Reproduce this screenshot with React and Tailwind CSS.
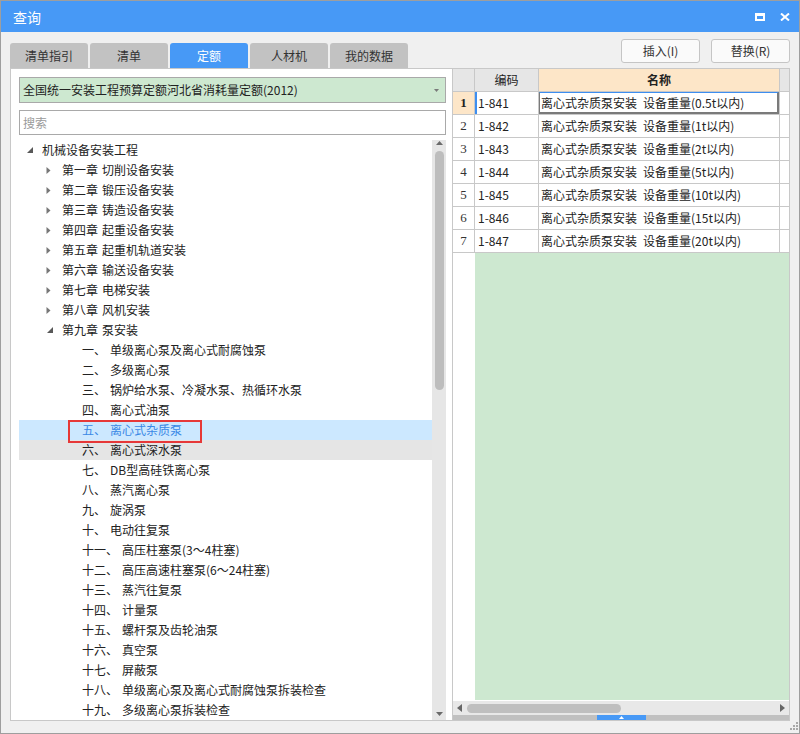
import React from 'react';

const TABS = ['清单指引', '清单', '定额', '人材机', '我的数据'];

const CHAPTERS = [
  ['第一章', '切削设备安装'],
  ['第二章', '锻压设备安装'],
  ['第三章', '铸造设备安装'],
  ['第四章', '起重设备安装'],
  ['第五章', '起重机轨道安装'],
  ['第六章', '输送设备安装'],
  ['第七章', '电梯安装'],
  ['第八章', '风机安装'],
];

const SECTIONS = [
  ['一、', '单级离心泵及离心式耐腐蚀泵'],
  ['二、', '多级离心泵'],
  ['三、', '锅炉给水泵、冷凝水泵、热循环水泵'],
  ['四、', '离心式油泵'],
  ['五、', '离心式杂质泵'],
  ['六、', '离心式深水泵'],
  ['七、', 'DB型高硅铁离心泵'],
  ['八、', '蒸汽离心泵'],
  ['九、', '旋涡泵'],
  ['十、', '电动往复泵'],
  ['十一、', '高压柱塞泵(3～4柱塞)'],
  ['十二、', '高压高速柱塞泵(6～24柱塞)'],
  ['十三、', '蒸汽往复泵'],
  ['十四、', '计量泵'],
  ['十五、', '螺杆泵及齿轮油泵'],
  ['十六、', '真空泵'],
  ['十七、', '屏蔽泵'],
  ['十八、', '单级离心泵及离心式耐腐蚀泵拆装检查'],
  ['十九、', '多级离心泵拆装检查'],
];

const ROWS = [
  ['1-841', '0.5t'],
  ['1-842', '1t'],
  ['1-843', '2t'],
  ['1-844', '5t'],
  ['1-845', '10t'],
  ['1-846', '15t'],
  ['1-847', '20t'],
];

const treeRows = [
  { level: 0, state: 'open', parts: ['机械设备安装工程'] },
  ...CHAPTERS.map((c) => ({ level: 1, state: 'closed', parts: c })),
  { level: 1, state: 'open', parts: ['第九章', '泵安装'] },
  ...SECTIONS.map((s) => ({ level: 2, state: 'leaf', parts: s })),
];

function Toggle({ state }) {
  if (state === 'open') {
    return (
      <svg width="6" height="6" viewBox="0 0 6 6" className="ml-[2px]">
        <polygon points="6,0 6,6 0,6" fill="#595959" />
      </svg>
    );
  }
  if (state === 'closed') {
    return (
      <svg width="5" height="7" viewBox="0 0 5 7" className="ml-[1px]">
        <polygon points="0.5,0 4.5,3.5 0.5,7" fill="#777777" />
      </svg>
    );
  }
  return null;
}

function TreeRow({ row, index }) {
  const selected = index === 14;
  const hover = index === 15;
  const pad = ['pl-[6px]', 'pl-[26px]', 'pl-[46px]'][row.level];
  let bg = '';
  if (selected) bg = 'bg-[#cce8ff] text-[#3a89e6]';
  else if (hover) bg = 'bg-[#e5e5e5] text-[#222]';
  else bg = 'text-[#222]';

  return (
    <div className={`relative h-[20px] flex items-center shrink-0 ${pad} ${bg}`}>
      <div className="w-[16px] h-[20px] flex items-center">
        <Toggle state={row.state} />
      </div>
      <span className="ml-[1px] whitespace-nowrap">{row.parts[0]}</span>
      {row.parts[1] && <span className="ml-[4px] whitespace-nowrap">{row.parts[1]}</span>}
      {selected && (
        <span className="absolute z-10 left-[49px] top-0 w-[134px] h-[23px] border-2 border-[#e63838]" />
      )}
    </div>
  );
}

function GridRow({ code, weight, index }) {
  const first = index === 0;
  return (
    <div className="flex h-[23px] border-b border-[#c8c8c8] shrink-0">
      <div
        className={`w-[22px] border-r border-[#c8c8c8] flex items-center justify-center font-['Liberation_Serif',serif] text-[13px] ${
          first ? 'bg-[#fde6c8] font-bold text-[#222]' : 'bg-white text-[#333]'
        }`}
      >
        {index + 1}
      </div>
      <div
        className={`w-[64px] border-r border-[#c8c8c8] flex items-center pl-[3px] ${
          first ? 'shadow-[inset_2px_0_0_#3d8ef0]' : ''
        }`}
      >
        {code}
      </div>
      <div className="relative w-[241px] border-r border-[#c8c8c8] flex items-center pl-[2px] whitespace-nowrap">
        <span>离心式杂质泵安装</span>
        <span className="ml-[6px]">设备重量({weight}以内)</span>
        {first && (
          <span className="absolute inset-0 border-t border-l border-r-2 border-b-2 border-[#7a7a7a] border-t-[#3d8ef0]" />
        )}
      </div>
      <div className="flex-1 bg-white" />
    </div>
  );
}

export default function App() {
  return (
    <div className="relative w-[800px] h-[734px] flex flex-col bg-[#f0f0f0] border border-[#9e9e9e] font-['Noto_Sans_CJK_SC',sans-serif] text-[12px] text-[#222] overflow-hidden">
      {/* title bar */}
      <div className="h-[31px] shrink-0 bg-[#4799f6] flex items-center justify-between pl-[12px] pr-[9px]">
        <span className="text-white text-[14px] leading-none">查询</span>
        <div className="flex items-center gap-[15px]">
          <svg width="10" height="8" viewBox="0 0 10 8">
            <rect x="1" y="1" width="8" height="6" fill="none" stroke="#fff" strokeWidth="2" />
            <rect x="0" y="0" width="10" height="3" fill="#fff" />
          </svg>
          <svg width="10" height="8" viewBox="0 0 10 8">
            <path d="M1 0.5 L9 7.5 M9 0.5 L1 7.5" stroke="#fff" strokeWidth="2" />
          </svg>
        </div>
      </div>

      {/* body */}
      <div className="flex-1 flex flex-col pl-[9px] pr-[9px] pb-[12px]">
        <div className="h-[36px] shrink-0 flex justify-between">
          <div className="self-end flex gap-[2px]">
            {TABS.map((t) => (
              <div
                key={t}
                className={`w-[78px] h-[25px] rounded-t-[3px] flex items-center justify-center ${
                  t === '定额' ? 'bg-[#4799f6] text-white' : 'bg-[#c2c2c2] text-[#333]'
                }`}
              >
                {t}
              </div>
            ))}
          </div>
          <div className="flex gap-[11px] pt-[7px]">
            <button className="w-[79px] h-[24px] border border-[#c5c5c5] rounded-[3px] bg-[#fafafa] text-[#333]">
              插入(I)
            </button>
            <button className="w-[79px] h-[24px] border border-[#c5c5c5] rounded-[3px] bg-[#fafafa] text-[#333]">
              替换(R)
            </button>
          </div>
        </div>

        <div className="flex h-[653px]">
          {/* left panel */}
          <div className="w-[442px] flex flex-col bg-white border-l border-t border-b border-[#c8c8c8] pl-[8px] pr-[6px] pt-[8px]">
            <div className="h-[26px] shrink-0 border border-[#a9a9a9] bg-[#cde8d0] flex items-center justify-between pl-[3px] pr-[6px]">
              <span className="whitespace-nowrap">全国统一安装工程预算定额河北省消耗量定额(2012)</span>
              <svg width="5" height="3" viewBox="0 0 5 3">
                <polygon points="0,0 5,0 2.5,3" fill="#7a7a7a" />
              </svg>
            </div>
            <div className="mt-[7px] h-[25px] shrink-0 border border-[#a9a9a9] bg-white flex items-center pl-[3px] text-[#9a9a9a]">
              搜索
            </div>
            <div className="mt-[5px] flex-1 min-h-0 flex">
              <div className="flex-1 flex flex-col overflow-hidden">
                {treeRows.map((r, i) => (
                  <TreeRow key={i} row={r} index={i} />
                ))}
              </div>
              <div className="w-[14px] bg-[#e6e6e6] flex flex-col items-center">
                <svg width="7" height="4" viewBox="0 0 7 4" className="mt-[1px]">
                  <polygon points="3.5,0 7,4 0,4" fill="#6a6a6a" />
                </svg>
                <div className="mt-[6px] w-[9px] h-[239px] rounded-full bg-[#bdbdbd]" />
                <div className="flex-1" />
                <svg width="7" height="4" viewBox="0 0 7 4" className="mb-[4px]">
                  <polygon points="0,0 7,0 3.5,4" fill="#6a6a6a" />
                </svg>
              </div>
            </div>
          </div>

          {/* right panel */}
          <div className="w-[338px] flex flex-col bg-white border border-[#c8c8c8]">
            <div className="flex h-[23px] shrink-0 border-b border-[#c8c8c8]">
              <div className="w-[22px] bg-[#e6e6e6] border-r border-[#c8c8c8]" />
              <div className="w-[64px] bg-[#e6e6e6] border-r border-[#c8c8c8] flex items-center justify-center">
                编码
              </div>
              <div className="w-[241px] bg-[#fde6c8] border-r border-[#c8c8c8] flex items-center justify-center font-bold">
                名称
              </div>
              <div className="flex-1 bg-[#e6e6e6]" />
            </div>
            {ROWS.map(([code, weight], i) => (
              <GridRow key={code} code={code} weight={weight} index={i} />
            ))}
            <div className="flex-1 flex">
              <div className="w-[22px] bg-white" />
              <div className="flex-1 bg-[#cde8d0]" />
            </div>
            <div className="h-[15px] shrink-0 bg-[#e8e8e8] border-t border-white flex items-center pl-[4px] pr-[4px]">
              <svg width="5" height="8" viewBox="0 0 5 8">
                <polygon points="5,0 5,8 0,4" fill="#666" />
              </svg>
              <div className="ml-[5px] w-[154px] h-[9px] rounded-full bg-[#bfbfbf]" />
              <div className="flex-1" />
              <svg width="5" height="8" viewBox="0 0 5 8">
                <polygon points="0,0 5,4 0,8" fill="#666" />
              </svg>
            </div>
            <div className="h-[5px] shrink-0 bg-[#c0c0c0] flex justify-center">
              <div className="w-[49px] bg-[#4799f6] flex items-center justify-center">
                <svg width="5" height="3" viewBox="0 0 5 3">
                  <polygon points="2.5,0 5,3 0,3" fill="#fff" />
                </svg>
              </div>
            </div>
          </div>
        </div>
      </div>

      {/* resize grip */}
      <svg width="8" height="8" viewBox="0 0 8 8" className="absolute right-[1px] bottom-[3px]">
        <rect x="6" y="0" width="2" height="2" fill="#a8a8a8" />
        <rect x="3" y="3" width="2" height="2" fill="#a8a8a8" />
        <rect x="6" y="3" width="2" height="2" fill="#a8a8a8" />
        <rect x="0" y="6" width="2" height="2" fill="#a8a8a8" />
        <rect x="3" y="6" width="2" height="2" fill="#a8a8a8" />
        <rect x="6" y="6" width="2" height="2" fill="#a8a8a8" />
      </svg>
    </div>
  );
}
